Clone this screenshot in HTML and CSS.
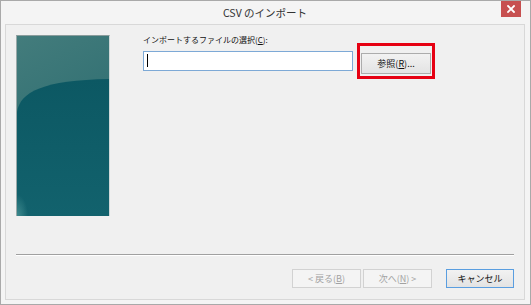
FILE: index.html
```html
<!DOCTYPE html>
<html lang="ja">
<head>
  <meta charset="UTF-8" />
  <title>CSV のインポート</title>
  <link rel="stylesheet" href="styles.css">
</head>
<body>
  <div class="window">
    <div class="titlebar">
      <span class="title">CSV のインポート</span>
      <button class="close" aria-label="閉じる">
        <svg width="8" height="8" viewBox="0 0 8 8">
          <path d="M1 1 L7 7 M7 1 L1 7" stroke="#fff" stroke-width="1.8" stroke-linecap="square"/>
        </svg>
      </button>
    </div>

    <div class="client">
      <div class="top">
        <div class="banner">
          <svg width="92" height="180" viewBox="0 0 92 180" preserveAspectRatio="none">
            <defs>
              <linearGradient id="upper" x1="0" y1="0" x2="0.3" y2="1">
                <stop offset="0" stop-color="#437c7c"/>
                <stop offset="1" stop-color="#286a6e"/>
              </linearGradient>
              <linearGradient id="lower" x1="0" y1="0" x2="0" y2="1">
                <stop offset="0" stop-color="#0c5863"/>
                <stop offset="1" stop-color="#12626d"/>
              </linearGradient>
              <radialGradient id="glow" cx="0" cy="1" r="0.12">
                <stop offset="0" stop-color="#3f8a8e"/>
                <stop offset="1" stop-color="#3f8a8e" stop-opacity="0"/>
              </radialGradient>
            </defs>
            <rect width="92" height="180" fill="url(#upper)"/>
            <path d="M0 76 C3 56 26 44 92 43 L92 180 L0 180 Z" fill="url(#lower)"/>
            <rect width="92" height="180" fill="url(#glow)"/>
          </svg>
        </div>

        <div class="form">
          <label class="field-label">インポートするファイルの選択(<u>C</u>):</label>
          <div class="file-row">
            <div class="textbox"><span class="caret"></span></div>
            <div class="highlight">
              <button class="btn">参照(<u>R</u>)...</button>
            </div>
          </div>
        </div>
      </div>

      <div class="separator"></div>

      <div class="actions">
        <button class="btn disabled">&lt; 戻る(<u>B</u>)</button>
        <button class="btn disabled">次へ(<u>N</u>) &gt;</button>
        <button class="btn default cancel">キャンセル</button>
      </div>
    </div>
  </div>
</body>
</html>
```

FILE: styles.css
```css
* {
  box-sizing: border-box;
}

body {
  margin: 0;
  background: #fff;
  font-family: "Noto Sans CJK JP", "Noto Sans", sans-serif;
  color: #111;
}

.window {
  width: 531px;
  height: 305px;
  border: 1px solid #a9a9a9;
  background: #f4f4f4;
  padding: 0 5px 4px 4px;
  display: flex;
  flex-direction: column;
}

.titlebar {
  height: 23px;
  position: relative;
  display: flex;
  align-items: center;
  justify-content: center;
}

.title {
  font-size: 10.5px;
  color: #333;
  line-height: 1;
  margin-top: 1px;
}

.close {
  position: absolute;
  top: 0;
  right: 4px;
  width: 20px;
  height: 16px;
  padding: 0;
  border: none;
  background: #c75050;
  display: flex;
  align-items: center;
  justify-content: center;
}

.client {
  flex: 1;
  border: 1px solid #d8d8d8;
  background: #f0f0f0;
  padding: 10px 10px 0 10px;
  display: flex;
  flex-direction: column;
}

.top {
  display: flex;
  height: 181px;
}

.banner {
  width: 94px;
  height: 181px;
  border-top: 1px solid #8a9c9c;
  border-left: 1px solid #9aa9a9;
  border-right: 1px solid #d0d8d8;
}

.banner svg {
  display: block;
}

.form {
  margin-left: 33px;
  display: flex;
  flex-direction: column;
}

.field-label {
  font-size: 8px;
  line-height: 10px;
  height: 10px;
}

.file-row {
  display: flex;
  align-items: center;
  height: 31px;
}

.textbox {
  width: 210px;
  height: 20px;
  border: 1px solid #7da9d6;
  background: #fff;
  display: flex;
  align-items: center;
  padding-left: 3px;
}

.caret {
  width: 1px;
  height: 13px;
  background: #000;
}

.highlight {
  margin-left: 4px;
  border: 3px solid #e60012;
  padding: 2px 1px;
}

.btn {
  font-family: inherit;
  font-size: 9px;
  line-height: 1;
  color: #111;
  width: 70px;
  height: 21px;
  padding: 0;
  border: 1px solid #acacac;
  border-radius: 0;
  background: linear-gradient(#f2f2f2, #e3e3e3);
}

.separator {
  margin-top: 38px;
  height: 2px;
  border-top: 1px solid #a0a0a0;
  border-bottom: 1px solid #fff;
}

.actions {
  margin-top: 13px;
  display: flex;
  justify-content: flex-end;
  gap: 2px;
}

.actions .btn {
  width: 69px;
  height: 19px;
}

.btn.disabled {
  color: #a2a2a2;
  border-color: #d2d2d2;
  background: #f4f4f4;
}

.btn.default {
  border-color: #5a9ee0;
}

.actions .cancel {
  margin-left: 12px;
  width: 68px;
}
```
